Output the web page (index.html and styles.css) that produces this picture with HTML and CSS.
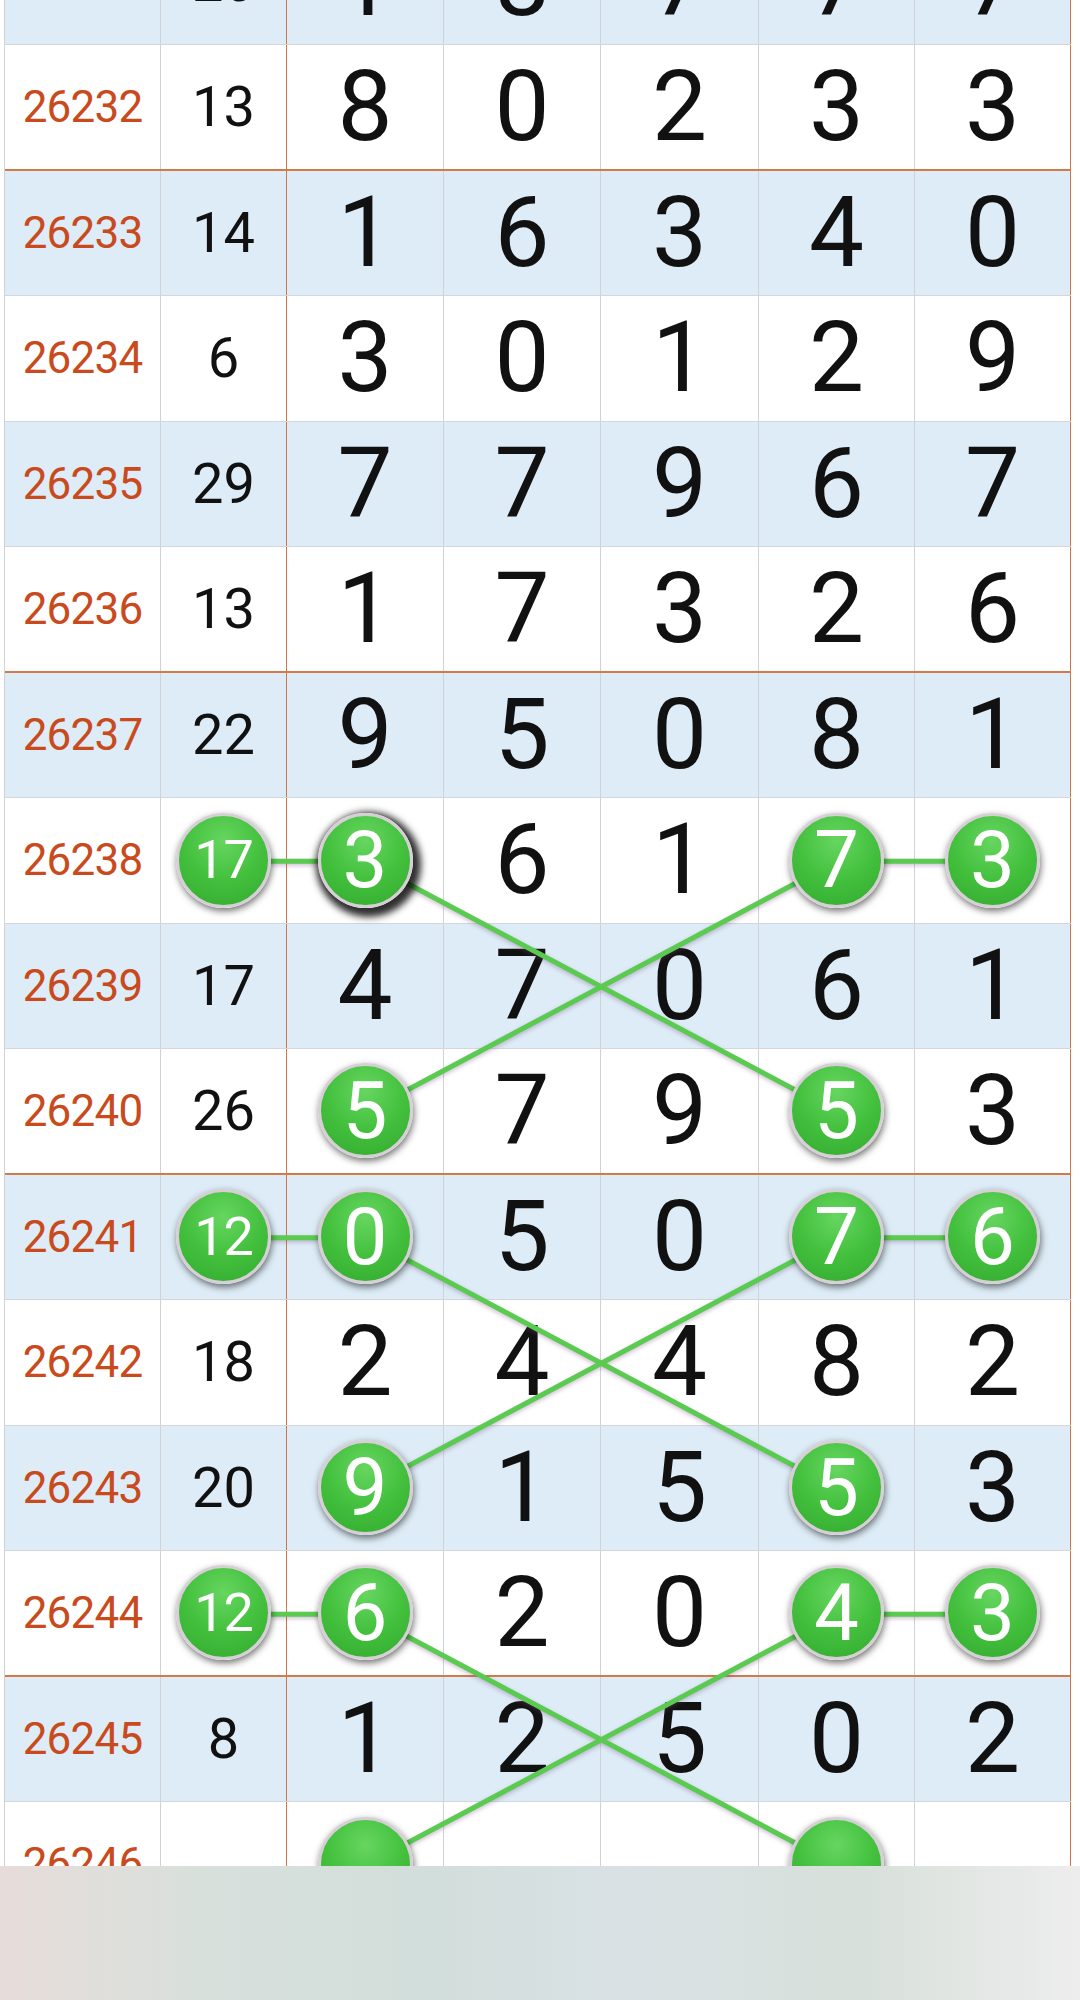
FILE: index.html
```html
<!DOCTYPE html>
<html lang="zh">
  <head>
    <meta charset="UTF-8" />
    <meta name="viewport" content="width=device-width, initial-scale=1.0" />
    <title>走势图</title>
    <link rel="stylesheet" href="styles.css">
  </head>
  <body>
    <div class="chart">
      <div class="row blue">
        <div class="cell issue">26231</div>
        <div class="cell sum">20</div>
        <div class="cell num">1</div>
        <div class="cell num">8</div>
        <div class="cell num">7</div>
        <div class="cell num">7</div>
        <div class="cell num">7</div>
      </div>
      <div class="row group-end">
        <div class="cell issue">26232</div>
        <div class="cell sum">13</div>
        <div class="cell num">8</div>
        <div class="cell num">0</div>
        <div class="cell num">2</div>
        <div class="cell num">3</div>
        <div class="cell num">3</div>
      </div>
      <div class="row blue">
        <div class="cell issue">26233</div>
        <div class="cell sum">14</div>
        <div class="cell num">1</div>
        <div class="cell num">6</div>
        <div class="cell num">3</div>
        <div class="cell num">4</div>
        <div class="cell num">0</div>
      </div>
      <div class="row">
        <div class="cell issue">26234</div>
        <div class="cell sum">6</div>
        <div class="cell num">3</div>
        <div class="cell num">0</div>
        <div class="cell num">1</div>
        <div class="cell num">2</div>
        <div class="cell num">9</div>
      </div>
      <div class="row blue">
        <div class="cell issue">26235</div>
        <div class="cell sum">29</div>
        <div class="cell num">7</div>
        <div class="cell num">7</div>
        <div class="cell num">9</div>
        <div class="cell num">6</div>
        <div class="cell num">7</div>
      </div>
      <div class="row group-end">
        <div class="cell issue">26236</div>
        <div class="cell sum">13</div>
        <div class="cell num">1</div>
        <div class="cell num">7</div>
        <div class="cell num">3</div>
        <div class="cell num">2</div>
        <div class="cell num">6</div>
      </div>
      <div class="row blue">
        <div class="cell issue">26237</div>
        <div class="cell sum">22</div>
        <div class="cell num">9</div>
        <div class="cell num">5</div>
        <div class="cell num">0</div>
        <div class="cell num">8</div>
        <div class="cell num">1</div>
      </div>
      <div class="row">
        <div class="cell issue">26238</div>
        <div class="cell sum"><span class="ball small">17</span></div>
        <div class="cell num"><span class="ball active">3</span></div>
        <div class="cell num">6</div>
        <div class="cell num">1</div>
        <div class="cell num"><span class="ball">7</span></div>
        <div class="cell num"><span class="ball">3</span></div>
      </div>
      <div class="row blue">
        <div class="cell issue">26239</div>
        <div class="cell sum">17</div>
        <div class="cell num">4</div>
        <div class="cell num">7</div>
        <div class="cell num">0</div>
        <div class="cell num">6</div>
        <div class="cell num">1</div>
      </div>
      <div class="row group-end">
        <div class="cell issue">26240</div>
        <div class="cell sum">26</div>
        <div class="cell num"><span class="ball">5</span></div>
        <div class="cell num">7</div>
        <div class="cell num">9</div>
        <div class="cell num"><span class="ball">5</span></div>
        <div class="cell num">3</div>
      </div>
      <div class="row blue">
        <div class="cell issue">26241</div>
        <div class="cell sum"><span class="ball small">12</span></div>
        <div class="cell num"><span class="ball">0</span></div>
        <div class="cell num">5</div>
        <div class="cell num">0</div>
        <div class="cell num"><span class="ball">7</span></div>
        <div class="cell num"><span class="ball">6</span></div>
      </div>
      <div class="row">
        <div class="cell issue">26242</div>
        <div class="cell sum">18</div>
        <div class="cell num">2</div>
        <div class="cell num">4</div>
        <div class="cell num">4</div>
        <div class="cell num">8</div>
        <div class="cell num">2</div>
      </div>
      <div class="row blue">
        <div class="cell issue">26243</div>
        <div class="cell sum">20</div>
        <div class="cell num"><span class="ball">9</span></div>
        <div class="cell num">1</div>
        <div class="cell num">5</div>
        <div class="cell num"><span class="ball">5</span></div>
        <div class="cell num">3</div>
      </div>
      <div class="row group-end">
        <div class="cell issue">26244</div>
        <div class="cell sum"><span class="ball small">12</span></div>
        <div class="cell num"><span class="ball">6</span></div>
        <div class="cell num">2</div>
        <div class="cell num">0</div>
        <div class="cell num"><span class="ball">4</span></div>
        <div class="cell num"><span class="ball">3</span></div>
      </div>
      <div class="row blue">
        <div class="cell issue">26245</div>
        <div class="cell sum">8</div>
        <div class="cell num">1</div>
        <div class="cell num">2</div>
        <div class="cell num">5</div>
        <div class="cell num">0</div>
        <div class="cell num">2</div>
      </div>
      <div class="row">
        <div class="cell issue">26246</div>
        <div class="cell sum"></div>
        <div class="cell num"><span class="ball"></span></div>
        <div class="cell num"></div>
        <div class="cell num"></div>
        <div class="cell num"><span class="ball"></span></div>
        <div class="cell num"></div>
      </div>

      <!-- trend lines, centers of the balls -->
      <svg class="links" width="1066" height="2008" viewBox="0 0 1066 2008">
        <g stroke="#5acb50" stroke-width="5" stroke-linecap="round">
          <line x1="219" y1="941.25" x2="360.5" y2="941.25" />
          <line x1="832" y1="941.25" x2="988" y2="941.25" />
          <line x1="360.5" y1="941.25" x2="832" y2="1192.25" />
          <line x1="832" y1="941.25" x2="360.5" y2="1192.25" />

          <line x1="219" y1="1317.75" x2="360.5" y2="1317.75" />
          <line x1="832" y1="1317.75" x2="988" y2="1317.75" />
          <line x1="360.5" y1="1317.75" x2="832" y2="1568.75" />
          <line x1="832" y1="1317.75" x2="360.5" y2="1568.75" />

          <line x1="219" y1="1694.25" x2="360.5" y2="1694.25" />
          <line x1="832" y1="1694.25" x2="988" y2="1694.25" />
          <line x1="360.5" y1="1694.25" x2="832" y2="1945.25" />
          <line x1="832" y1="1694.25" x2="360.5" y2="1945.25" />
        </g>
      </svg>
    </div>

    <div class="navbar"></div>
  </body>
</html>
```

FILE: styles.css
```css
* {
  margin: 0;
  padding: 0;
  box-sizing: border-box;
}

body {
  background: white;
  font-family: Roboto, "Noto Sans", sans-serif;
  color: #111;
  overflow: hidden;
}

.chart {
  position: relative;
  width: 1067px;
  margin: -80.5px 0 0 4px;
  border-left: 1px solid #cfd3d7;
}

.row {
  display: grid;
  grid-template-columns: 156px 126px 157px 157px 158px 156px 156px;
  height: 125.5px;
  border-bottom: 1px solid #d3d7db;
  background: white;
}

.row.blue {
  background: #ddecf6;
}

.row.group-end {
  border-bottom: 2px solid #d27a48;
}

.cell {
  display: flex;
  align-items: center;
  justify-content: center;
  border-right: 1px solid #cfd3d7;
  line-height: 1;
}

.cell.sum,
.cell:nth-child(7) {
  border-right: 1px solid #cf7444;
}

.issue {
  color: #c84a1d;
  font-size: 44px;
  letter-spacing: -0.8px;
}

.sum {
  font-size: 56px;
}

.num {
  font-size: 98px;
}

.ball {
  position: relative;
  z-index: 2;
  display: flex;
  align-items: center;
  justify-content: center;
  width: 95px;
  height: 95px;
  border-radius: 50%;
  border: 3px solid #d6d0d6;
  background: radial-gradient(circle at 50% 28%, #66d660 0%, #43c03d 50%, #33aa2f 100%);
  box-shadow: 1px 3px 7px rgba(0, 0, 0, 0.55);
  color: white;
  font-size: 80px;
}

.ball.small {
  font-size: 54px;
  letter-spacing: -1px;
}

.ball.active {
  box-shadow: 3px 4px 7px 5px rgba(10, 10, 10, 0.85);
}

.links {
  position: absolute;
  top: 0;
  left: 0;
  z-index: 1;
  filter: drop-shadow(0 2px 2px rgba(120, 70, 130, 0.35));
}

.navbar {
  position: fixed;
  left: 0;
  bottom: 0;
  width: 100%;
  height: 134px;
  z-index: 5;
  background: linear-gradient(90deg, #e7dcd9 0%, #d8e0dc 18%, #d2dedb 40%, #d9e1e5 58%, #d8e0db 80%, #ededed 100%);
}
```
